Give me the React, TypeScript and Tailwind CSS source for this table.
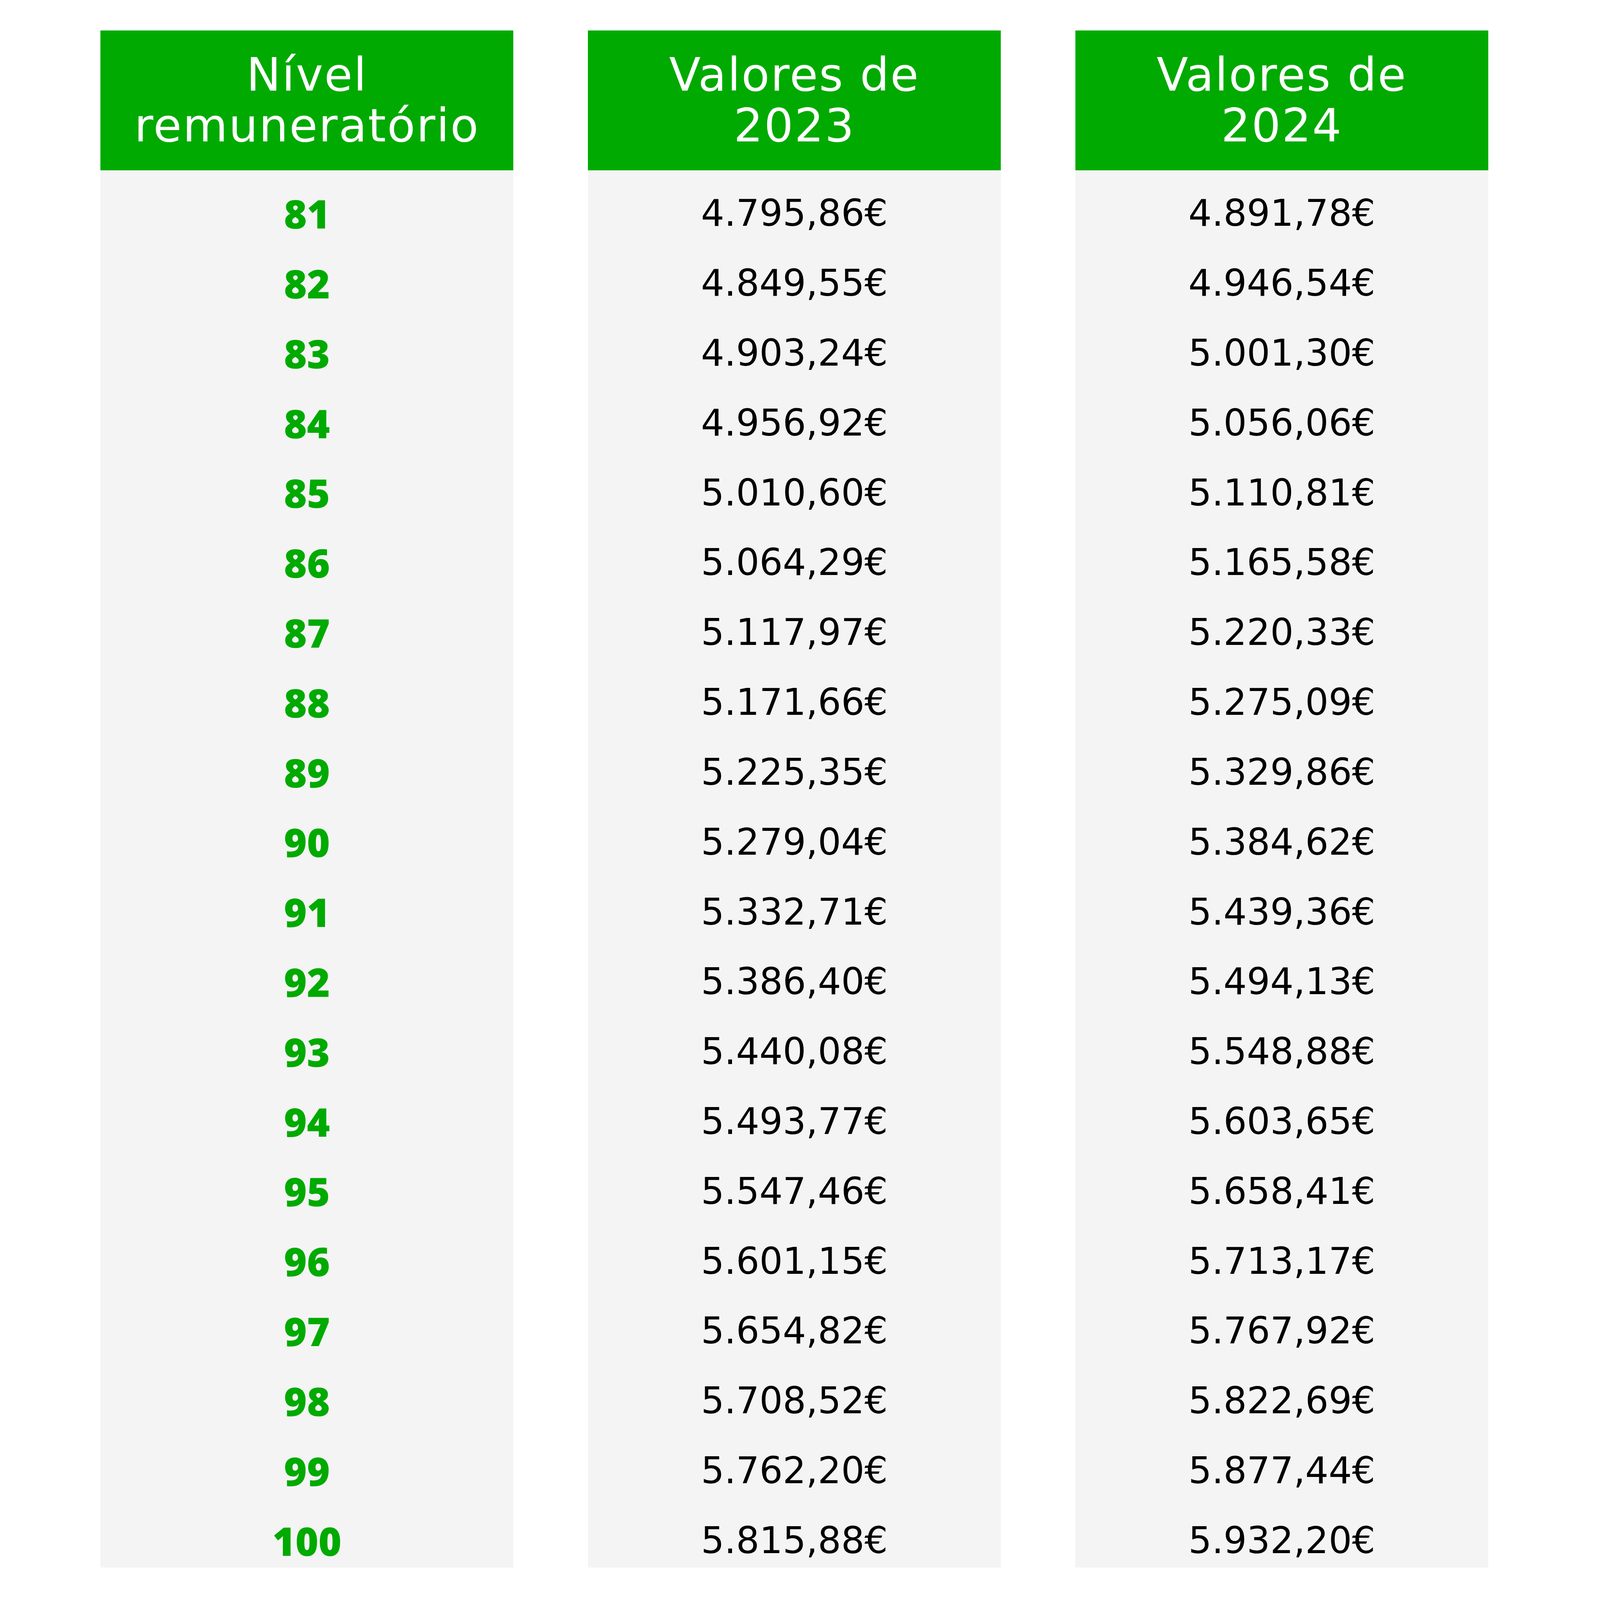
import React from "react";

const rows: [string, string, string][] = [
  ["81", "4.795,86€", "4.891,78€"],
  ["82", "4.849,55€", "4.946,54€"],
  ["83", "4.903,24€", "5.001,30€"],
  ["84", "4.956,92€", "5.056,06€"],
  ["85", "5.010,60€", "5.110,81€"],
  ["86", "5.064,29€", "5.165,58€"],
  ["87", "5.117,97€", "5.220,33€"],
  ["88", "5.171,66€", "5.275,09€"],
  ["89", "5.225,35€", "5.329,86€"],
  ["90", "5.279,04€", "5.384,62€"],
  ["91", "5.332,71€", "5.439,36€"],
  ["92", "5.386,40€", "5.494,13€"],
  ["93", "5.440,08€", "5.548,88€"],
  ["94", "5.493,77€", "5.603,65€"],
  ["95", "5.547,46€", "5.658,41€"],
  ["96", "5.601,15€", "5.713,17€"],
  ["97", "5.654,82€", "5.767,92€"],
  ["98", "5.708,52€", "5.822,69€"],
  ["99", "5.762,20€", "5.877,44€"],
  ["100", "5.815,88€", "5.932,20€"],
];

function Column({
  title1,
  title2,
  values,
  bold,
}: {
  title1: string;
  title2: string;
  values: string[];
  bold?: boolean;
}) {
  return (
    <div className="flex w-[25.806vw] shrink-0 flex-col">
      <div className="flex h-[8.734vh] items-center justify-center bg-[#00aa00]">
        <div className="text-center font-['DejaVu_Sans',sans-serif] text-[2.875vw] leading-[3.166vh] tracking-[0.07vw] font-normal text-white">
          <div>{title1}</div>
          <div>{title2}</div>
        </div>
      </div>
      <div className="flex flex-col gap-[1.004vh] bg-[#f4f4f4] pt-[1.026vh]">
        {values.map((v, i) => (
          <div key={i} className="flex h-[3.362vh] items-center justify-center">
            {bold ? (
              <span className="font-['Open_Sans',sans-serif] text-[2.458vw] leading-none font-extrabold text-[#00aa00]">
                {v}
              </span>
            ) : (
              <span className="font-['DejaVu_Sans',sans-serif] text-[2.295vw] leading-none font-normal text-black">
                {v}
              </span>
            )}
          </div>
        ))}
      </div>
    </div>
  );
}

export default function App() {
  return (
    <div className="min-h-screen w-full bg-white">
      <div className="flex gap-[4.66vw] pt-[1.9vh] pl-[6.283vw]">
        <Column title1="Nível" title2="remuneratório" values={rows.map((r) => r[0])} bold />
        <Column title1="Valores de" title2="2023" values={rows.map((r) => r[1])} />
        <Column title1="Valores de" title2="2024" values={rows.map((r) => r[2])} />
      </div>
    </div>
  );
}
